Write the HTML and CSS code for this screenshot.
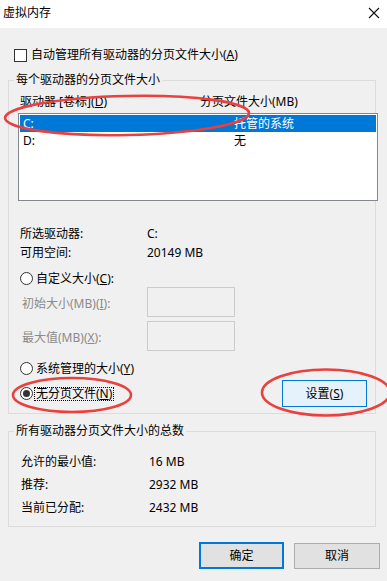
FILE: index.html
```html
<!DOCTYPE html>
<html lang="zh-CN">
<head>
<meta charset="utf-8">
<title>虚拟内存</title>
<link rel="stylesheet" href="styles.css">
</head>
<body>
<div class="window">
  <div class="titlebar">
    <span class="title">虚拟内存</span>
    <svg class="close" width="12" height="12" viewBox="0 0 12 12"><path d="M1 1 L11 11 M11 1 L1 11" stroke="#111" stroke-width="1.1" fill="none"/></svg>
  </div>
  <div class="content">
    <div class="check-row">
      <span class="checkbox"></span>
      <span>自动管理所有驱动器的分页文件大小(<u>A</u>)</span>
    </div>

    <fieldset class="group group-drives">
      <legend>每个驱动器的分页文件大小</legend>
      <div class="list-head">
        <span class="col-drive">驱动器 [卷标](<u>D</u>)</span>
        <span>分页文件大小(MB)</span>
      </div>
      <div class="listbox">
        <div class="list-row selected"><span class="col-d">C:</span><span>托管的系统</span></div>
        <div class="list-row"><span class="col-d">D:</span><span>无</span></div>
      </div>
      <div class="info-row first"><span class="info-label">所选驱动器:</span><span>C:</span></div>
      <div class="info-row"><span class="info-label">可用空间:</span><span>20149 MB</span></div>

      <div class="radio-row custom"><span class="radio"></span><span>自定义大小(<u>C</u>):</span></div>
      <div class="input-row"><span class="input-label">初始大小(MB)(<u>I</u>):</span><span class="textbox"></span></div>
      <div class="input-row second"><span class="input-label">最大值(MB)(<u>X</u>):</span><span class="textbox"></span></div>

      <div class="radio-row sys"><span class="radio"></span><span>系统管理的大小(<u>Y</u>)</span></div>
      <div class="last-row">
        <div class="radio-line"><span class="radio checked"></span><span class="focus">无分页文件(<u>N</u>)</span></div>
        <button class="btn btn-set">设置(<u>S</u>)</button>
      </div>
    </fieldset>

    <fieldset class="group group-total">
      <legend>所有驱动器分页文件大小的总数</legend>
      <div class="total-row first"><span class="total-label">允许的最小值:</span><span>16 MB</span></div>
      <div class="total-row"><span class="total-label">推荐:</span><span>2932 MB</span></div>
      <div class="total-row"><span class="total-label">当前已分配:</span><span>2432 MB</span></div>
    </fieldset>

    <div class="footer">
      <button class="btn btn-ok">确定</button>
      <button class="btn btn-cancel">取消</button>
    </div>
  </div>

  <svg class="marks" width="387" height="581" viewBox="0 0 387 581">
    <ellipse cx="127" cy="115.5" rx="122" ry="19.5" transform="rotate(-1.2 127 115.5)" fill="none" stroke="#e8413f" stroke-width="2.6"/>
    <ellipse cx="72" cy="395" rx="59" ry="17" fill="none" stroke="#e8413f" stroke-width="2.6"/>
    <ellipse cx="326" cy="392.5" rx="64" ry="23" fill="none" stroke="#e8413f" stroke-width="2.6"/>
  </svg>
</div>
</body>
</html>
```

FILE: styles.css
```css
* { box-sizing: border-box; }
html, body { margin: 0; padding: 0; }
body {
  width: 387px;
  height: 581px;
  overflow: hidden;
  background: #f0f0f0;
  font-family: "Noto Sans", "Noto Sans CJK SC", sans-serif;
  font-size: 12px;
  color: #000;
}
u { text-decoration: underline; text-underline-offset: 1px; }
.window { position: relative; width: 387px; height: 581px; }

.titlebar {
  height: 28px;
  background: #fff;
  display: flex;
  align-items: center;
  justify-content: space-between;
  padding: 0 7px 2px 3px;
}
.title { line-height: 26px; }
.close { display: block; }

.content { display: flex; flex-direction: column; }

.check-row {
  margin-top: 20px;
  height: 14px;
  display: flex;
  align-items: center;
  padding-left: 14px;
  gap: 4px;
  line-height: 14px;
}
.checkbox {
  width: 13px; height: 13px;
  border: 1px solid #333;
  background: #fff;
  flex: none;
}

.group {
  margin: 0 0 0 8px;
  width: 368px;
  border: 1px solid #dcdcdc;
  padding: 0;
  min-width: 0;
}
.group legend {
  padding: 0 2px;
  margin-left: 5px;
  line-height: 16px;
  height: 16px;
}
.group-drives { margin-top: 10px; padding-bottom: 6px; }

.list-head {
  margin-top: 6px;
  height: 16px;
  line-height: 16px;
  display: flex;
  padding-left: 11px;
}
.col-drive { width: 180px; }

.listbox {
  margin: 3px -3px 0 9px;
  height: 88px;
  border: 1px solid #828790;
  background: #fff;
  padding: 1px 1px 0 1px;
}
.list-row {
  height: 17px;
  line-height: 17px;
  display: flex;
  padding-left: 3px;
}
.list-row.selected { background: #0078d7; color: #fff; }
.col-d { width: 211px; }

.info-row {
  height: 19px;
  line-height: 19px;
  display: flex;
  padding-left: 11px;
}
.info-row.first { margin-top: 23px; }
.info-label { width: 127px; }

.radio-row {
  display: flex;
  align-items: center;
  gap: 3px;
  padding-left: 11px;
  height: 17px;
  line-height: 17px;
}
.radio-row.custom { margin-top: 8px; }
.radio-row.sys { margin-top: 9px; height: 16px; }
.radio {
  width: 13px; height: 13px;
  border: 1px solid #333;
  border-radius: 50%;
  background: #fff;
  flex: none;
  display: flex;
  align-items: center;
  justify-content: center;
}
.radio.checked::after {
  content: "";
  width: 7px; height: 7px;
  border-radius: 50%;
  background: #333;
}

.input-row {
  display: flex;
  align-items: center;
  height: 30px;
  padding-left: 13px;
  color: #8a8a8a;
}
.input-row.second { margin-top: 4px; }
.input-label { width: 125px; padding-top: 2px; }
.textbox {
  width: 88px;
  height: 30px;
  border: 1px solid #cccccc;
  background: #f0f0f0;
}

.last-row {
  margin-top: 4px;
  height: 27px;
  display: flex;
  align-items: center;
  justify-content: space-between;
  padding: 0 8px 0 11px;
}
.radio-line { display: flex; align-items: center; gap: 2px; }
.focus {
  outline: 1px dotted #000;
  outline-offset: 0;
  padding: 0 1px;
  line-height: 12px;
}

.btn {
  font: inherit;
  color: #000;
  background: #e1e1e1;
  border: 1px solid #adadad;
  padding: 0;
  margin: 0;
  line-height: 1;
}
.btn-set {
  width: 85px;
  height: 27px;
  background: #e5f1fb;
  border: 1px solid #0078d7;
}

.group-total { margin-top: 9px; padding-bottom: 7px; }
.total-row {
  height: 23px;
  line-height: 23px;
  display: flex;
  padding-left: 12px;
}
.total-row.first { margin-top: 11px; }
.total-label { width: 128px; }

.footer {
  margin-top: 15px;
  display: flex;
  justify-content: flex-end;
  gap: 10px;
  padding-right: 7px;
}
.btn-ok {
  width: 85px;
  height: 27px;
  border: 2px solid #0078d7;
}
.btn-cancel {
  width: 86px;
  height: 26px;
  margin-top: 1px;
}

.marks {
  position: absolute;
  left: 0; top: 0;
  pointer-events: none;
}
```
